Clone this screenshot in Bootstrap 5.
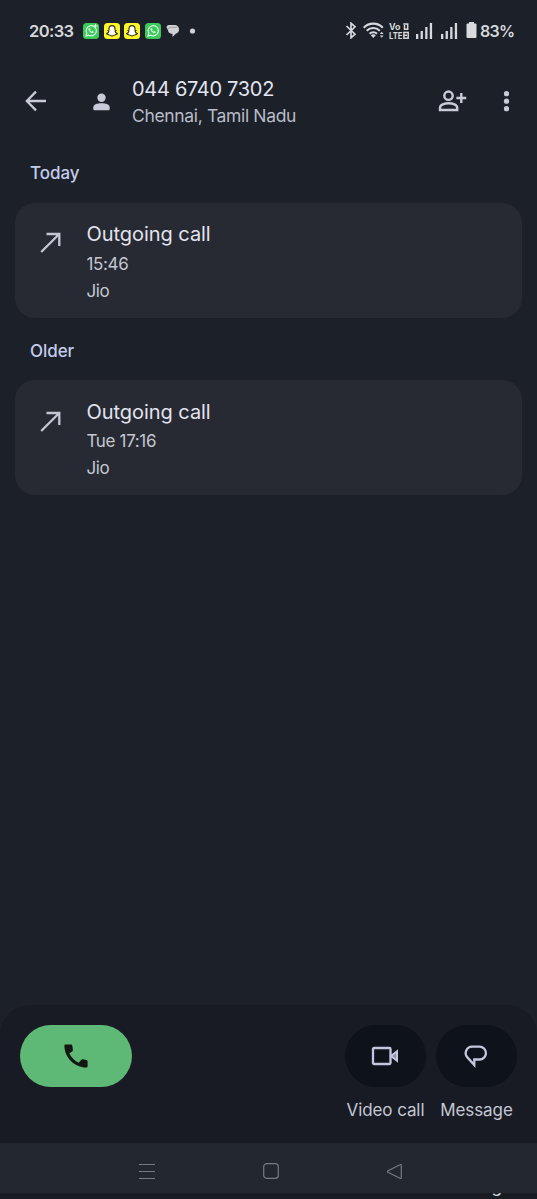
<!DOCTYPE html>
<html lang="en">
<head>
<meta charset="utf-8">
<meta name="viewport" content="width=device-width, initial-scale=1">
<title>Call history</title>
<link href="https://cdn.jsdelivr.net/npm/bootstrap@5.3.0/dist/css/bootstrap.min.css" rel="stylesheet">
<style>
body{background:#1c2028;color:#c4c7d3;font-family:Inter,Roboto,sans-serif;font-size:17px;line-height:27px}
.screen{height:1199px}
svg{display:block;flex:none}
.status{height:61px;padding:0 23px 0 29px;color:#d6d8dc}
.clock{font-size:16.5px;font-weight:600;letter-spacing:-.6px;width:54px;padding-top:1px}
.apps{gap:4.5px}
.pct{font-size:16px;font-weight:600;letter-spacing:-.7px;width:34px;white-space:nowrap;padding-top:1px}
.topbar{height:82px;padding:0 20px 0 22px}
.names{margin-left:22px}
.number{font-size:20px;color:#e2e4ef;letter-spacing:-.3px;line-height:27px}
.place{font-size:17.5px;letter-spacing:-.35px;line-height:26px;color:#b9bcc8}
.day{padding-left:30px;color:#c4ccec;font-size:17px;line-height:27px;font-weight:450;letter-spacing:-.05px}
.call-card{margin:0 15px;height:115px;border:0;border-radius:20px;background:#272a32;padding:17.5px 0 0 23px;color:#c4c7d3}
.call-title{font-size:20px;line-height:29px;color:#e2e4ef;letter-spacing:-.05px}
.call-lines{margin-left:24.500px;font-size:17px;letter-spacing:-.35px}
.call-meta{padding-top:1.500px}
.actions{height:138px;background:#181b23;border-radius:30px 30px 0 0;padding:20px 20px 0}
.pill{height:62px;width:81px;border:0;border-radius:31px;background:#0e121a;padding:0;color:#c4c7dc}
.pill-call{width:112px;background:#5fb976;color:#101811}
.action-label{margin-top:10px;font-size:17px;letter-spacing:-.1px;white-space:nowrap}
.navkeys{height:50px;background:#23272f;color:#777a82}
.edge{height:6px;background:#191b23}
.peek{font-size:17px;line-height:20px;margin:-17px 35px 0 0;color:#d0d2da}
</style>
</head>
<body>
<svg width="0" height="0" class="position-absolute" aria-hidden="true">
<defs>
<g id="wa"><rect width="16" height="16" rx="3.5" fill="#3fc95c"/><path d="M3 13l.8-2.8A5.1 5.1 0 1 1 5.8 12.2Z" fill="none" stroke="#e4ffe8" stroke-width="1.1"/><path d="M5.900 5.200c-.8.8-.2 2.300.9 3.500s2.800 1.900 3.700 1l.1-.9-1.400-.7-.7.600C7.800 8.400 7.300 7.900 7 7.200l.5-.6-.5-1.400Z" fill="#e4ffe8"/></g>
<g id="sc"><rect width="16" height="16" rx="3.500" fill="#fdf628"/><path d="M8 2.600c2 0 3 1.300 3 3.100v1.500l1 .3-.9 1c.4 1.100 1 1.700 2.200 2.100-.3.800-1.300.7-1.900 1.100-.6.300-.9.600-1.600.5-.8 0-1 .8-1.800.8s-1-.8-1.800-.8c-.7.100-1-.2-1.600-.5-.6-.4-1.600-.3-1.900-1.100C3.900 10.200 4.500 9.600 4.900 8.500L4 7.500l1-.3V5.700C5 3.900 6 2.600 8 2.600Z" fill="#fff" stroke="#33330c" stroke-width="1.100"/></g>
<g id="bars" fill="currentColor"><rect x="0" y="11" width="2.300" height="5"/><rect x="4.600" y="8" width="2.300" height="8"/><rect x="9.200" y="4" width="2.300" height="12"/><rect x="13.800" y="0" width="2.300" height="16"/></g>
<g id="out"><path d="M1.200 20L19 2.200M6.500 2H19.300V14" fill="none" stroke="#c4c7d3" stroke-width="2.300"/></g>
</defs></svg>

<main class="screen d-flex flex-column overflow-hidden">
<div class="status d-flex align-items-center">
  <span class="clock">20:33</span>
  <div class="apps d-flex align-items-center">
    <svg width="16" height="16"><use href="#wa"/><path d="M12.500 1v4M10.500 3h4" stroke="#e4ffe8"/></svg>
    <svg width="16" height="16"><use href="#sc"/></svg>
    <svg width="16" height="16"><use href="#sc"/></svg>
    <svg width="16" height="16"><use href="#wa"/></svg>
    <svg style="margin-left:1px" width="14" height="14" viewBox="0 0 14 14"><path d="M3 1h5c3.500 0 5 2 5 4.500 0 2-1 3.500-3 4L6.500 13v-3C3.500 9.800 2 8 2 6L.5 3.500C.5 2 1.500 1 3 1Z" fill="#d0d1d5"/><path d="M2 5.200C3 3.500 4 3.300 6 3.300h5" fill="none" stroke="#85878d" stroke-width=".7"/></svg>
    <svg style="margin-left:1px" width="14" height="16"><circle cx="6.500" cy="8" r="2.600" fill="#d0d1d5"/></svg>
  </div>
  <div class="ms-auto d-flex align-items-center">
    <svg width="12" height="17" viewBox="0 0 12 17"><path d="M1.500 4L10 12.200 6 15.800V1.200L10 4.800 1.500 13" fill="none" stroke="currentColor" stroke-width="1.700"/></svg>
    <svg style="margin-left:6px" width="21" height="17" viewBox="0 0 21 17"><g fill="none" stroke="currentColor" stroke-width="2.100"><path d="M.7 5.700C6 .3 14.500.3 19.800 5.700M3.700 8.800c3.700-3.700 9.400-3.700 13.100 0M6.600 11.700c2-2 5.400-2 7.400 0"/></g><path d="M7.800 13.200q2.500-1.700 5 0L10.300 16Z" fill="currentColor"/><path d="M16.800 12l1.900-2.200 1.900 2.200ZM16.800 13.500l1.900 2.200 1.900-2.200Z" fill="currentColor"/></svg>
    <svg style="margin-left:5px" width="21" height="18" viewBox="0 0 21 18"><g fill="currentColor" font-family="Inter" font-weight="700"><text x="0" y="7.700" font-size="8.500" textLength="11.500" lengthAdjust="spacingAndGlyphs">Vo</text><text x="0" y="16.700" font-size="9" textLength="13.500" lengthAdjust="spacingAndGlyphs">LTE</text></g><g fill="none" stroke="currentColor" stroke-width="1.500"><path d="M14.300 2h4.400v5.300h-3.200V3"/><rect x="14.900" y="10.400" width="4.300" height="5.800"/><path d="M15 13.300h3"/></g></svg>
    <svg style="margin-left:6px" width="17" height="16"><use href="#bars"/></svg>
    <svg style="margin-left:8px" width="17" height="16"><use href="#bars"/></svg>
    <svg style="margin-left:8px" width="11" height="17"><path d="M3 0h5v1.500h1.500q1 0 1 1V15q0 1-1 1h-8q-1 0-1-1V2.500q0-1 1-1H3Z" fill="#d8dadd"/></svg>
    <span class="pct" style="margin-left:3px">83%</span>
  </div>
</div>

<header class="topbar d-flex align-items-center">
  <svg style="margin-top:-2px" width="28" height="28" viewBox="0 0 28 28"><path d="M24 14H5M14 4.600L4.800 14l9.200 9.400" fill="none" stroke="#c8cad8" stroke-width="2.300"/></svg>
  <svg style="margin-left:43px;margin-top:-1px" width="17" height="18" viewBox="0 0 17 18"><circle cx="8.500" cy="4.700" r="4.200" fill="#c8cad8"/><path d="M.3 16V14.500C.3 11.500 4 10.200 8.500 10.200s8.200 1.300 8.200 4.300V16q0 1.200-1.200 1.200H1.500Q.3 17.200.3 16Z" fill="#c8cad8"/></svg>
  <div class="names"><div class="number">044 6740 7302</div><div class="place">Chennai, Tamil Nadu</div></div>
  <div class="ms-auto d-flex align-items-center" style="margin-top:-2px">
    <svg width="30" height="24" viewBox="0 0 30 24" fill="none" stroke="#c8cad8" stroke-width="2.400"><circle cx="11.500" cy="6.700" r="4.200"/><path d="M3 21v-2.300c0-3 4.500-4.500 8.600-4.500s8.600 1.500 8.600 4.500V21ZM24.300 4v10M19.400 9h9.800"/></svg>
    <svg style="margin-left:30px" width="20" height="24" fill="#c8cad8"><circle cx="9.500" cy="4.700" r="2.600"/><circle cx="9.500" cy="12.200" r="2.600"/><circle cx="9.500" cy="19.700" r="2.600"/></svg>
  </div>
</header>

<h2 class="day mb-0" style="margin-top:16.500px">Today</h2>
<section class="call-card card flex-row align-items-start" style="margin-top:16px">
  <svg style="margin:12px 0 0 2px" width="22" height="22"><use href="#out"/></svg>
  <div class="call-lines"><div class="call-title">Outgoing call</div><div class="call-meta"><div>15:46</div><div>Jio</div></div></div>
</section>
<h2 class="day mb-0" style="margin-top:20px">Older</h2>
<section class="call-card card flex-row align-items-start" style="margin-top:15.500px">
  <svg style="margin:13px 0 0 2px" width="22" height="22"><use href="#out"/></svg>
  <div class="call-lines"><div class="call-title">Outgoing call</div><div class="call-meta"><div>Tue 17:16</div><div>Jio</div></div></div>
</section>

<footer class="mt-auto">
  <div class="actions d-flex">
    <button class="pill pill-call d-flex align-items-center justify-content-center" aria-label="Call"><svg width="24" height="24" viewBox="0 0 24 24"><path d="M1.500.5h5.700q1 0 1.100 1l.6 4.500q0 .8-.5 1.300L5.300 9.500q3 6 9.300 9.300l2.800-3q.6-.6 1.300-.5l4 .8q.9.200.9 1.200v5q0 1.200-1.200 1.200C10.500 23.500.5 13.500.4 1.700.4.900.8.500 1.500.5Z" fill="currentColor"/></svg></button>
    <div class="ms-auto d-flex flex-column align-items-center">
      <button class="pill d-flex align-items-center justify-content-center" aria-label="Video call"><svg style="margin-right:1px" width="28" height="20" viewBox="0 0 28 20"><rect x="2" y="2" width="17.500" height="16" rx="1" fill="none" stroke="currentColor" stroke-width="2.300"/><path d="M20 10l6-4.700v9.400Z" fill="#8d909f" stroke="currentColor" stroke-width="2"/></svg></button>
      <div class="action-label">Video call</div>
    </div>
    <div class="d-flex flex-column align-items-center" style="margin-left:10px">
      <button class="pill d-flex align-items-center justify-content-center" aria-label="Message"><svg style="margin-right:1px" width="24" height="24" viewBox="0 0 24 24"><path d="M10.300 21V15.500H15.500a6.450 6.450 0 0 0 0-12.900H8.200a6.450 6.450 0 0 0-4.800 10.800Z" fill="none" stroke="currentColor" stroke-width="2.300"/></svg></button>
      <div class="action-label">Message</div>
    </div>
  </div>
  <div class="navkeys d-flex align-items-center">
    <svg style="margin-left:139px;margin-top:6px" width="16" height="17"><path d="M0 1.500h16M0 8.500h16M0 15.500h16" stroke="currentColor" stroke-width="1.200"/></svg>
    <svg style="margin-left:108px;margin-top:6px" width="16" height="16"><rect x=".7" y=".7" width="14.600" height="14.600" rx="3" fill="none" stroke="currentColor" stroke-width="1.200"/></svg>
    <svg style="margin-left:107px;margin-top:6px" width="17" height="17"><path d="M15.300 2.500v12q0 1.500-1.300.8L2 9.300q-1.200-.8 0-1.600L14 1.700q1.300-.7 1.300.8Z" fill="none" stroke="currentColor" stroke-width="1.200"/></svg>
  </div>
  <div class="edge d-flex justify-content-end overflow-hidden"><span class="peek">g</span></div>
</footer>
</main>
<script src="https://cdn.jsdelivr.net/npm/bootstrap@5.3.0/dist/js/bootstrap.bundle.min.js"></script>
</body>
</html>
